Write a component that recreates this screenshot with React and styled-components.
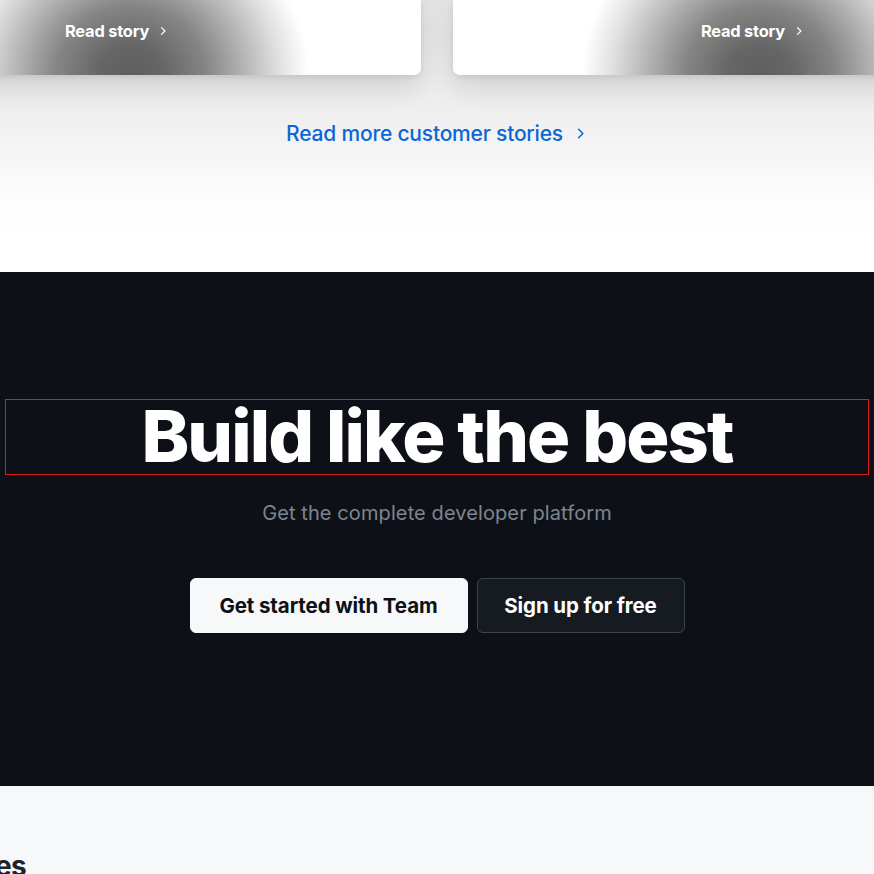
import React from 'react';
import styled, { createGlobalStyle } from 'styled-components';

const GlobalStyle = createGlobalStyle`
  html, body {
    margin: 0;
    padding: 0;
    overflow: hidden;
    background: #ffffff;
  }
  body {
    font-family: Inter, "Noto Sans", "Liberation Sans", sans-serif;
    -webkit-font-smoothing: antialiased;
  }
`;

const Stories = styled.section`
  height: 272px;
  background: linear-gradient(180deg, #e3e3e3 0px, #f0f0f0 120px, #fdfdfd 200px, #ffffff 240px);
  overflow: hidden;
`;

const CardRow = styled.div`
  display: grid;
  grid-template-columns: 1fr 1fr;
  gap: 32px;
  margin: 0 -24px;
`;

// soft grey glow that sits under the link of each story card
const glow = (x) =>
  `radial-gradient(ellipse 178px 165px at ${x}px 100%, #5e5e5e 0%, #666 18%, #858585 42%, #b3b3b3 63%, #e2e2e2 84%, #ffffff 100%)`;

const Card = styled.div`
  height: 75px;
  border-radius: 0 0 7px 7px;
  box-shadow: 0 12px 28px rgba(0, 0, 0, 0.12), 0 2px 6px rgba(0, 0, 0, 0.08);
  background: ${({ $side }) => ($side === 'left' ? glow(155) : glow(307))};
  display: flex;
  justify-content: ${({ $side }) => ($side === 'left' ? 'flex-start' : 'flex-end')};
  padding: 20px ${({ $side }) => ($side === 'left' ? '0 0 89px' : '93px 0 0')};
  box-sizing: border-box;
`;

const StoryLink = styled.a`
  display: inline-flex;
  align-items: center;
  gap: 8px;
  height: 22px;
  color: #ffffff;
  font-size: 16.4px;
  font-weight: 700;
  letter-spacing: -0.2px;
  text-decoration: none;
`;

const MoreRow = styled.div`
  display: flex;
  justify-content: center;
  padding-top: 46px;
`;

const MoreLink = styled.a`
  display: inline-flex;
  align-items: center;
  gap: 10px;
  color: #0b66d6;
  font-size: 21px;
  font-weight: 500;
  letter-spacing: -0.2px;
  text-decoration: none;
`;

const Cta = styled.section`
  background: #0d1117;
  height: 514px;
  box-sizing: border-box;
  padding: 127px 5px 0;
  display: flex;
  flex-direction: column;
  align-items: center;
`;

const Heading = styled.h2`
  align-self: stretch;
  margin: 0;
  height: 76px;
  border: 1px solid #d81c1c;
  box-sizing: border-box;
  color: #ffffff;
  font-size: 72px;
  font-weight: 800;
  letter-spacing: -1.9px;
  line-height: 72px;
  text-align: center;
`;

const Sub = styled.p`
  margin: 24px 0 0;
  color: #7d8590;
  font-size: 20px;
  font-weight: 400;
  letter-spacing: 0.1px;
  line-height: 28px;
`;

const Buttons = styled.div`
  display: flex;
  gap: 9px;
  margin-top: 51px;
`;

const Button = styled.a`
  display: flex;
  align-items: center;
  justify-content: center;
  height: 55px;
  box-sizing: border-box;
  width: ${({ $w }) => $w}px;
  border-radius: 6px;
  font-size: 20.5px;
  font-weight: 700;
  letter-spacing: -0.1px;
  text-decoration: none;
  background: ${({ $primary }) => ($primary ? '#f6f8fa' : '#161b22')};
  color: ${({ $primary }) => ($primary ? '#0d1117' : '#ffffff')};
  border: 1px solid ${({ $primary }) => ($primary ? '#f6f8fa' : '#3d444d')};
`;

const Next = styled.section`
  background: #f6f8fa;
  height: 200px;
  padding-top: 62px;
  box-sizing: border-box;
`;

const NextTitle = styled.h3`
  margin: 0 0 0 -113px;
  color: #1f2328;
  font-size: 28px;
  font-weight: 700;
  letter-spacing: -0.6px;
  line-height: 36px;
`;

const Chevron = ({ size = 12 }) => (
  <svg width={size} height={size} viewBox="0 0 16 16" fill="none" stroke="currentColor" strokeWidth="1.6" strokeLinecap="round" strokeLinejoin="round">
    <path d="M6 3.5L10.5 8L6 12.5" />
  </svg>
);

export default function App() {
  return (
    <>
      <GlobalStyle />
      <Stories>
        <CardRow>
          <Card $side="left">
            <StoryLink href="#">Read story <Chevron /></StoryLink>
          </Card>
          <Card $side="right">
            <StoryLink href="#">Read story <Chevron /></StoryLink>
          </Card>
        </CardRow>
        <MoreRow>
          <MoreLink href="#">Read more customer stories <Chevron size={15} /></MoreLink>
        </MoreRow>
      </Stories>
      <Cta>
        <Heading>Build like the best</Heading>
        <Sub>Get the complete developer platform</Sub>
        <Buttons>
          <Button href="#" $primary $w={278}>Get started with Team</Button>
          <Button href="#" $w={208}>Sign up for free</Button>
        </Buttons>
      </Cta>
      <Next>
        <NextTitle>Resources</NextTitle>
      </Next>
    </>
  );
}
